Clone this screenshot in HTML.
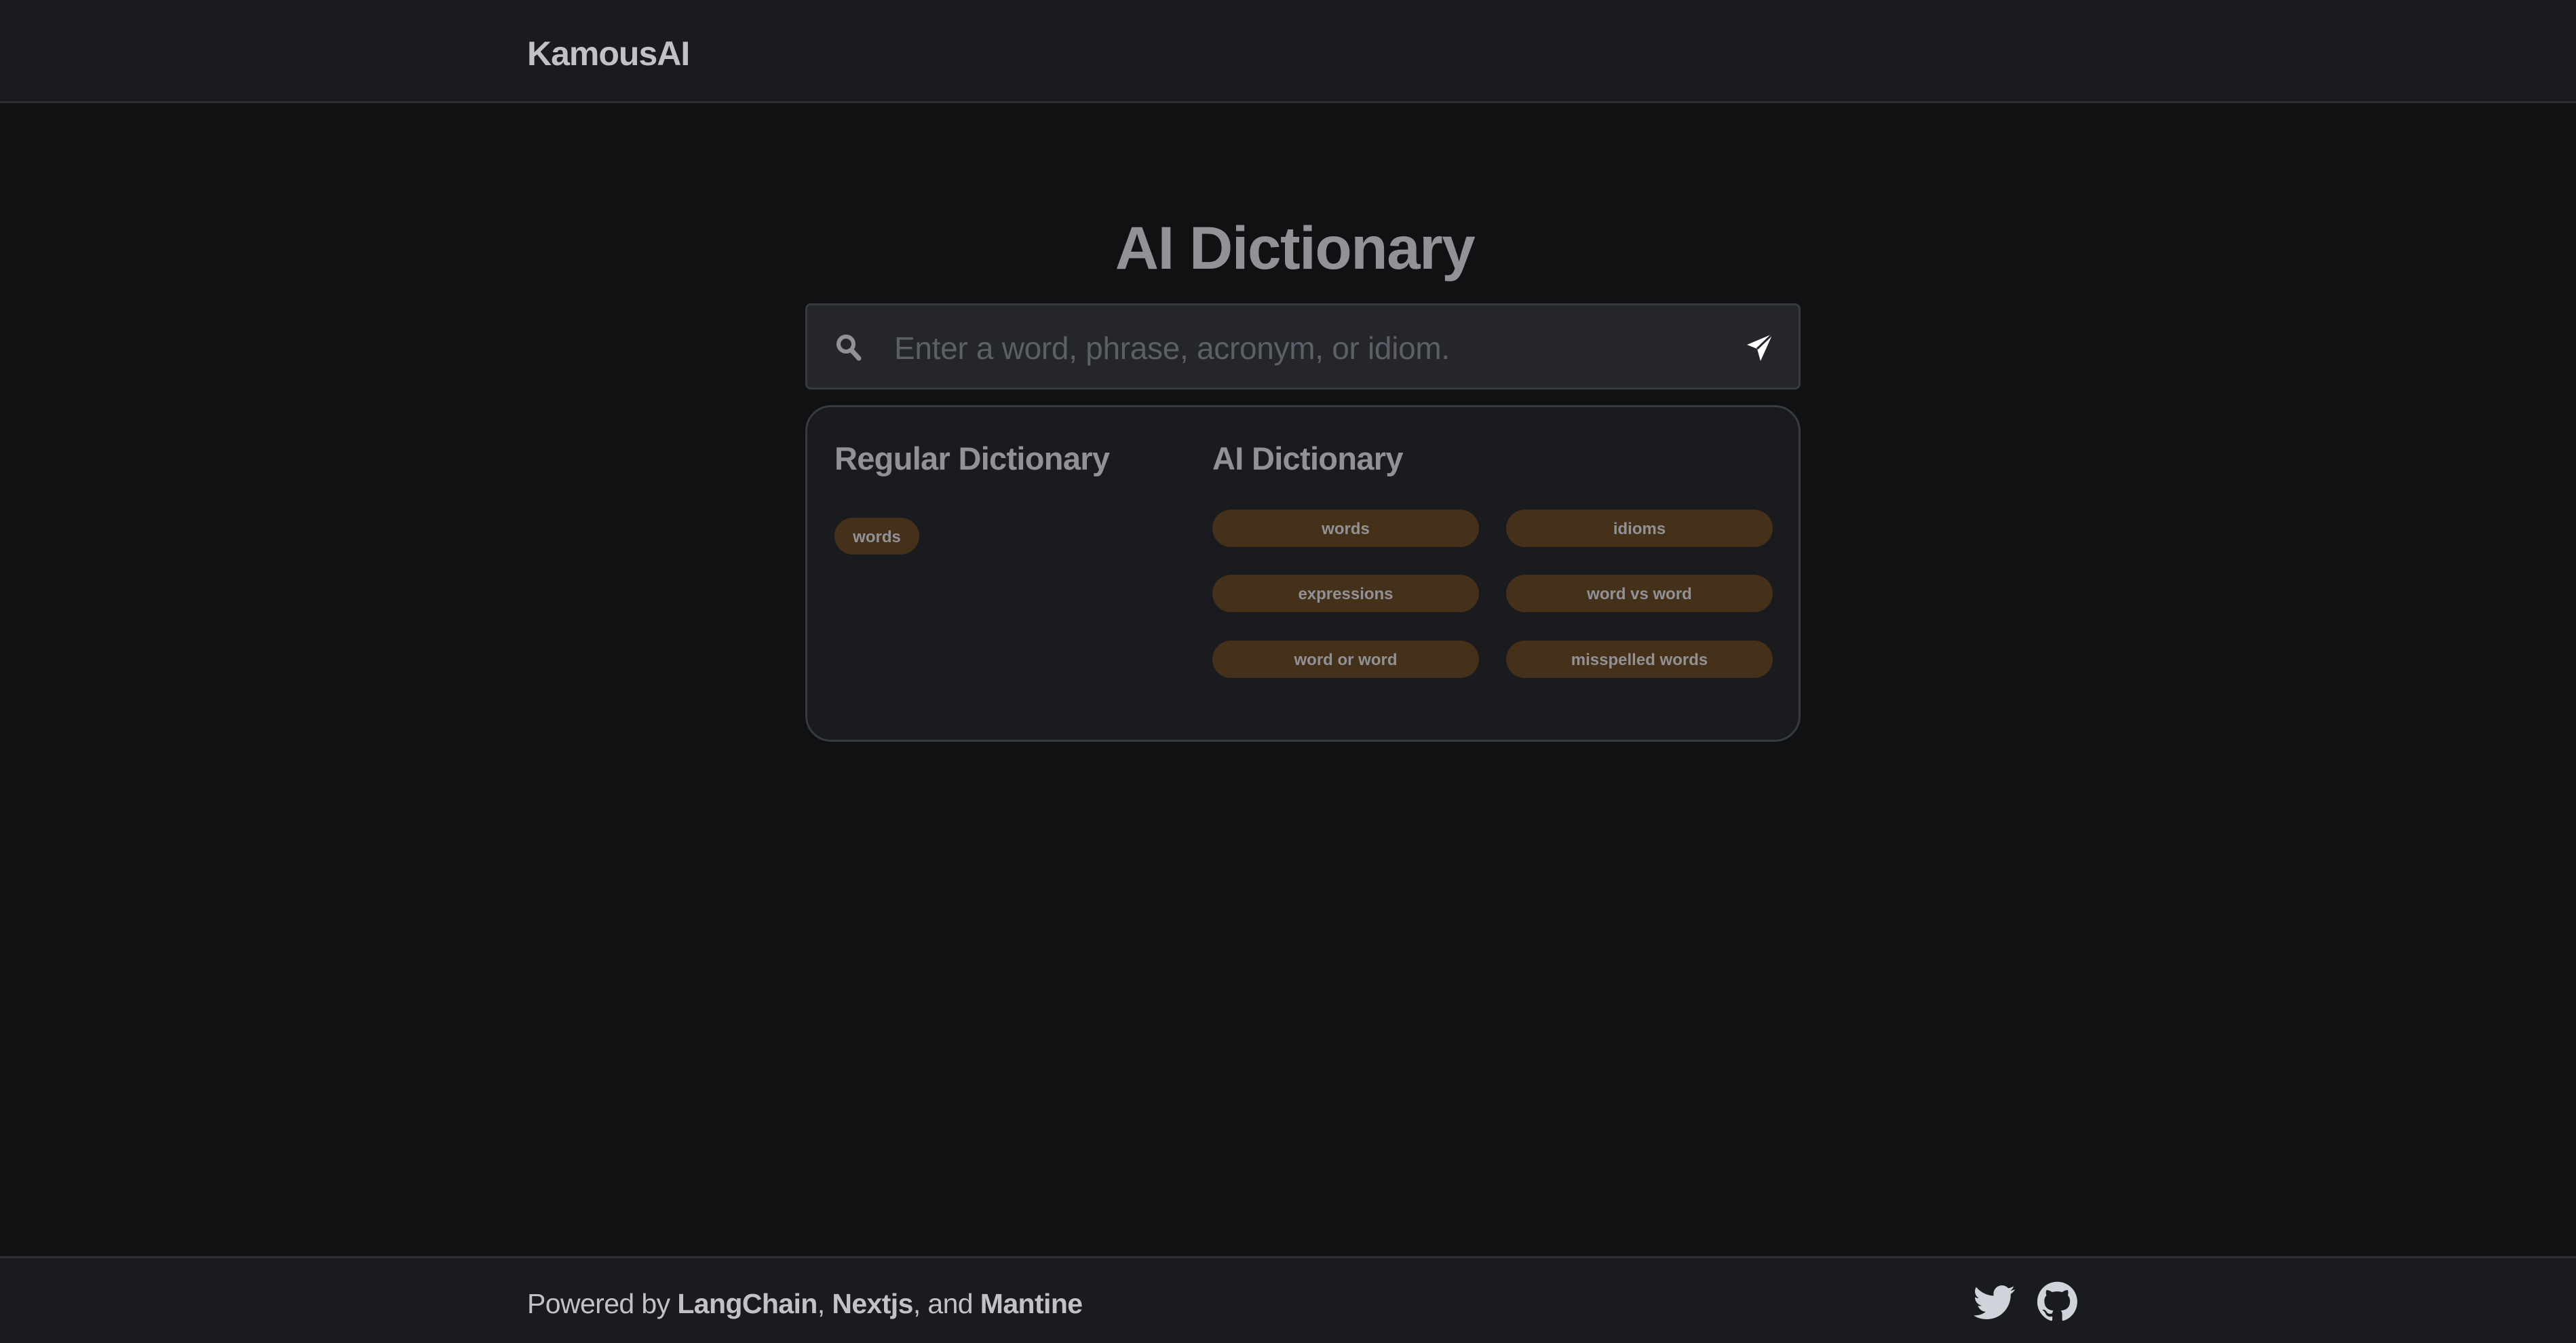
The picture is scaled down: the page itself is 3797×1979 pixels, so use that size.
<!DOCTYPE html>
<html><head><meta charset="utf-8"><style>
*{margin:0;padding:0;box-sizing:border-box}
body{width:3797px;height:1979px;background:#101113;font-family:"Liberation Sans",sans-serif;position:relative;overflow:hidden;color:#c1c2c5}
.hdr{position:absolute;left:0;top:0;width:3797px;height:152px;background:#1a1b1e;border-bottom:3px solid #2c2e33}
.logo{position:absolute;left:777px;top:50px;font-size:50px;font-weight:bold;color:#c1c2c5;letter-spacing:-1px}
.title{position:absolute;left:0;width:3797px;top:314px;text-align:center;font-size:89px;font-weight:bold;color:#909296;letter-spacing:-1.5px;padding-left:20px}
.search{position:absolute;left:1187px;top:447px;width:1467px;height:127px;background:#25262b;border:3px solid #373a40;border-radius:8px}
.ph{position:absolute;left:128px;top:36px;font-size:46px;color:#5c5f66;letter-spacing:-0.3px}
.card{position:absolute;left:1187px;top:597px;width:1467px;height:496px;background:#1a1b1e;border:3px solid #373a40;border-radius:38px}
.h{position:absolute;top:48px;font-size:47px;font-weight:bold;color:#909296;letter-spacing:-0.7px}
.b{position:absolute;height:55px;background:#45301a;border-radius:28px;color:#909296;font-weight:bold;font-size:24px;text-align:center;line-height:58px}
.ft{position:absolute;left:0;top:1851px;width:3797px;height:128px;background:#1a1b1e;border-top:3px solid #2c2e33}
.pw{position:absolute;left:777px;top:44px;font-size:41px;color:#c1c2c5;letter-spacing:-0.6px}
</style></head><body>
<div class="hdr"><div class="logo">KamousAI</div></div>
<div class="title">AI Dictionary</div>
<div class="search">
<svg style="position:absolute;left:42px;top:42px" width="38" height="40" viewBox="0 0 38 40"><circle cx="15" cy="15" r="11" fill="none" stroke="#909296" stroke-width="6"/><line x1="23" y1="24" x2="34" y2="36" stroke="#909296" stroke-width="7" stroke-linecap="round"/></svg>
<div class="ph">Enter a word, phrase, acronym, or idiom.</div>
<svg style="position:absolute;left:1383px;top:40px" width="42" height="44" viewBox="0 0 42 44"><path d="M40 2 L2 18 L17 24 L22 42 Z" fill="#fff"/><path d="M40 2 L17 24" stroke="#25262b" stroke-width="3"/></svg>
</div>
<div class="card">
<div class="h" style="left:40px">Regular Dictionary</div>
<div class="h" style="left:597px">AI Dictionary</div>
<div class="b" style="left:40px;top:163px;width:125px;height:54px;line-height:57px">words</div>
<div class="b" style="left:597px;top:151px;width:393px">words</div>
<div class="b" style="left:1030px;top:151px;width:393px">idioms</div>
<div class="b" style="left:597px;top:247px;width:393px">expressions</div>
<div class="b" style="left:1030px;top:247px;width:393px">word vs word</div>
<div class="b" style="left:597px;top:344px;width:393px">word or word</div>
<div class="b" style="left:1030px;top:344px;width:393px">misspelled words</div>
</div>
<div class="ft">
<div class="pw">Powered by <b>LangChain</b>, <b>Nextjs</b>, and <b>Mantine</b></div>
<svg style="position:absolute;left:2909px;top:40px" width="62" height="52" viewBox="0 0 24 20"><path fill="#ced4da" d="M23.6 2.3c-.9.4-1.8.6-2.8.8 1-.6 1.8-1.6 2.1-2.7-.9.6-2 1-3.1 1.2C18.9.6 17.6 0 16.200 0c-2.7 0-4.8 2.2-4.8 4.8 0 .4 0 .8.1 1.1C7.4 5.7 3.9 3.8 1.5.9c-.4.7-.7 1.6-.7 2.4 0 1.7.9 3.200 2.2 4-.8 0-1.5-.2-2.2-.6v.1c0 2.3 1.7 4.3 3.9 4.7-.4.1-.8.2-1.3.2-.3 0-.6 0-.9-.1.6 1.9 2.4 3.3 4.5 3.4-1.7 1.3-3.7 2.1-6 2.1H0c2.1 1.4 4.7 2.2 7.4 2.2 8.9 0 13.8-7.4 13.8-13.8v-.6c1-.7 1.8-1.5 2.4-2.5z"/></svg>
<svg style="position:absolute;left:3003px;top:34px" width="59" height="59" viewBox="0 0 24 24"><path fill="#ced4da" d="M12 .3a12 12 0 0 0-3.8 23.4c.6.1.8-.3.8-.6v-2c-3.3.7-4-1.6-4-1.6-.6-1.4-1.4-1.8-1.4-1.8-1-.7.1-.7.1-.7 1.2.1 1.8 1.2 1.8 1.2 1 1.8 2.8 1.3 3.5 1 0-.8.4-1.3.7-1.6-2.7-.3-5.500-1.3-5.500-6 0-1.2.5-2.3 1.3-3.1-.2-.4-.6-1.600 0-3.200 0 0 1-.3 3.4 1.200a11.5 11.5 0 0 1 6 0c2.3-1.5 3.3-1.2 3.3-1.2.6 1.6.2 2.8.1 3.2.8.8 1.3 1.9 1.3 3.2 0 4.6-2.8 5.6-5.5 5.9.4.4.8 1.1.8 2.2v3.3c0 .3.2.7.8.6A12 12 0 0 0 12 .3"/></svg>
</div>
</body></html>
